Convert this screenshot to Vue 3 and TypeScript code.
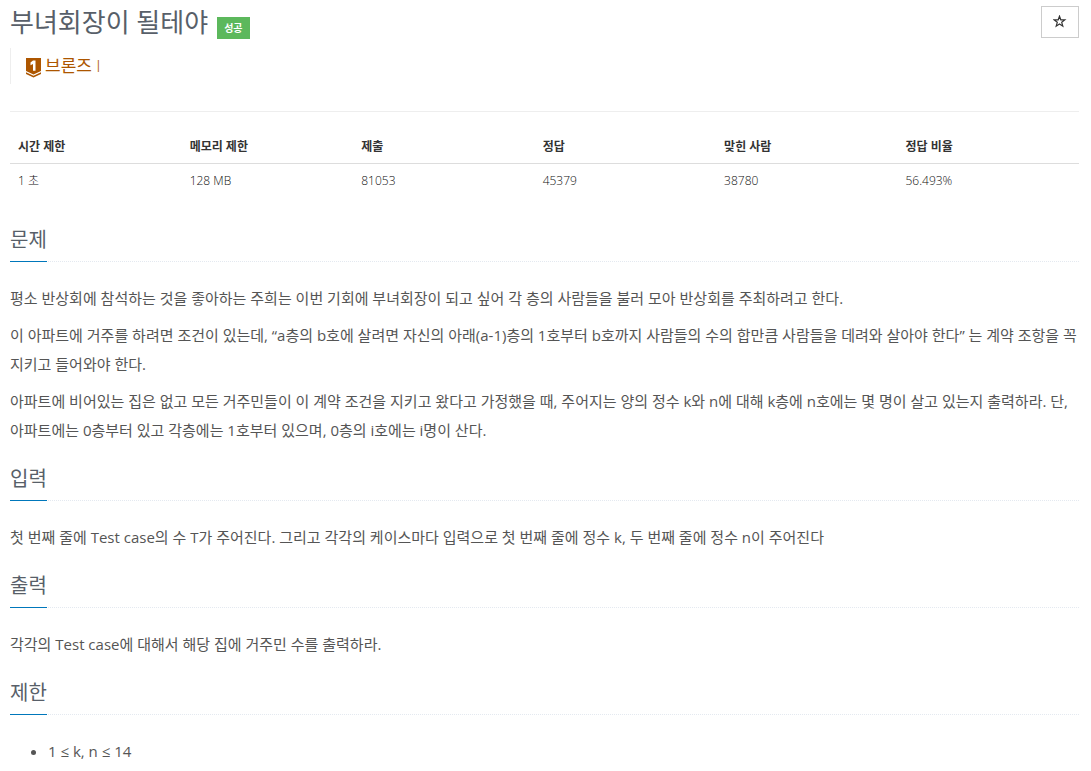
<script setup lang="ts">
import { ref } from 'vue'

interface Stat {
  label: string
  value: string
}

interface Section {
  title: string
  paragraphs: string[]
  items?: string[]
}

const starred = ref(false)

const stats: Stat[] = [
  { label: '시간 제한', value: '1 초' },
  { label: '메모리 제한', value: '128 MB' },
  { label: '제출', value: '81053' },
  { label: '정답', value: '45379' },
  { label: '맞힌 사람', value: '38780' },
  { label: '정답 비율', value: '56.493%' },
]

const sections: Section[] = [
  {
    title: '문제',
    paragraphs: [
      '평소 반상회에 참석하는 것을 좋아하는 주희는 이번 기회에 부녀회장이 되고 싶어 각 층의 사람들을 불러 모아 반상회를 주최하려고 한다.',
      '이 아파트에 거주를 하려면 조건이 있는데, “a층의 b호에 살려면 자신의 아래(a-1)층의 1호부터 b호까지 사람들의 수의 합만큼 사람들을 데려와 살아야 한다” 는 계약 조항을 꼭 지키고 들어와야 한다.',
      '아파트에 비어있는 집은 없고 모든 거주민들이 이 계약 조건을 지키고 왔다고 가정했을 때, 주어지는 양의 정수 k와 n에 대해 k층에 n호에는 몇 명이 살고 있는지 출력하라. 단, 아파트에는 0층부터 있고 각층에는 1호부터 있으며, 0층의 i호에는 i명이 산다.',
    ],
  },
  {
    title: '입력',
    paragraphs: [
      '첫 번째 줄에 Test case의 수 T가 주어진다. 그리고 각각의 케이스마다 입력으로 첫 번째 줄에 정수 k, 두 번째 줄에 정수 n이 주어진다',
    ],
  },
  {
    title: '출력',
    paragraphs: ['각각의 Test case에 대해서 해당 집에 거주민 수를 출력하라.'],
  },
  {
    title: '제한',
    paragraphs: [],
    items: ['1 ≤ k, n ≤ 14'],
  },
]
</script>

<template>
  <main class="page">
    <header class="header">
      <div class="title-row">
        <h1 class="title">부녀회장이 될테야</h1>
        <span class="badge">성공</span>
        <button
          class="star"
          type="button"
          aria-label="즐겨찾기"
          :aria-pressed="starred"
          @click="starred = !starred"
        >
          <svg viewBox="0 0 14 14" width="14" height="14" aria-hidden="true">
            <path
              d="M6.5 1.2 7.8 4.8 11.8 4.9 8.7 7.3 9.8 11.2 6.5 9 3.2 11.2 4.3 7.3 1.2 4.9 5.2 4.8Z"
              :fill="starred ? '#333' : 'none'"
              stroke="#333"
              stroke-width="1.2"
            />
          </svg>
        </button>
      </div>
      <div class="tier">
        <svg class="tier-icon" viewBox="0 0 15 20" width="15" height="20" aria-hidden="true">
          <path d="M0 0h15v13L7.500 16.500 0 13z" fill="#ad5600" />
          <path d="M0 14.300 7.500 17.800 15 14.300v1.700L7.500 19.600 0 16z" fill="#ad5600" />
          <path d="M7 2.500h2.500v10.200H7V6L4.500 7.300V4.600z" fill="#fff" />
        </svg>
        <span>브론즈 I</span>
      </div>
    </header>

    <table class="stats">
      <thead>
        <tr>
          <th v-for="s in stats" :key="s.label" scope="col">{{ s.label }}</th>
        </tr>
      </thead>
      <tbody>
        <tr>
          <td v-for="s in stats" :key="s.label">{{ s.value }}</td>
        </tr>
      </tbody>
    </table>

    <section v-for="sec in sections" :key="sec.title" class="section">
      <div class="headline"><h2>{{ sec.title }}</h2></div>
      <p v-for="p in sec.paragraphs" :key="p">{{ p }}</p>
      <ul v-if="sec.items">
        <li v-for="i in sec.items" :key="i">{{ i }}</li>
      </ul>
    </section>
  </main>
</template>

<style>
body {
  margin: 0;
  background: #fff;
}
</style>

<style scoped>
.page {
  padding: 0 12px 0 10px;
  font-family: 'Open Sans', 'Noto Sans CJK KR', sans-serif;
  font-weight: 400;
  color: #333;
}

.header {
  padding-bottom: 27px;
  border-bottom: 1px solid #eee;
}

.title-row {
  display: flex;
  align-items: flex-start;
  gap: 9px;
  padding-top: 6px;
}

.title {
  margin: 0;
  font-size: 26px;
  line-height: 32px;
  font-weight: 400;
  color: #585f69;
}

.badge {
  margin-top: 11px;
  padding: 0 7px;
  font-size: 10px;
  line-height: 22px;
  font-weight: 700;
  color: #fff;
  background: #5cb85c;
}

.star {
  display: flex;
  align-items: center;
  justify-content: center;
  width: 38px;
  height: 32px;
  margin-left: auto;
  padding: 0;
  border: 1px solid #ccc;
  background: #fff;
  cursor: pointer;
}

.tier {
  display: flex;
  align-items: flex-start;
  gap: 4px;
  margin-top: 9px;
  padding-left: 15px;
  border-left: 1px solid #eee;
  font-family: 'Open Sans Light', 'Open Sans', 'Noto Sans CJK KR', sans-serif;
  font-size: 17px;
  line-height: 36px;
  color: #ad5600;
}

.tier-icon {
  margin-top: 10px;
}

.stats {
  width: 100%;
  margin-top: 18px;
  border-collapse: collapse;
  table-layout: fixed;
  font-size: 12px;
  line-height: 17px;
}

.stats th,
.stats td {
  width: 17%;
  padding: 8px;
  text-align: left;
}

.stats th:nth-child(-n + 2) {
  width: 16%;
}

.stats th {
  font-weight: 700;
  border-bottom: 1px solid #ddd;
}

.stats td {
  font-weight: 300;
  color: #111;
}

.section {
  font-size: 15px;
  line-height: 29px;
  color: #555;
}

.headline {
  margin: 18px 0 22px;
  border-bottom: 1px dotted #e4e9f0;
}

.stats + .section .headline {
  margin-top: 27px;
}

.headline h2 {
  display: inline-block;
  margin: 0 0 -1px;
  padding-bottom: 5px;
  border-bottom: 1px solid #0077bb;
  font-size: 20px;
  line-height: 32px;
  font-weight: 400;
  color: #585f69;
  vertical-align: top;
}

.section p {
  margin: 0 0 8px;
}

.section ul {
  margin: 0;
  padding-left: 38px;
}
</style>
